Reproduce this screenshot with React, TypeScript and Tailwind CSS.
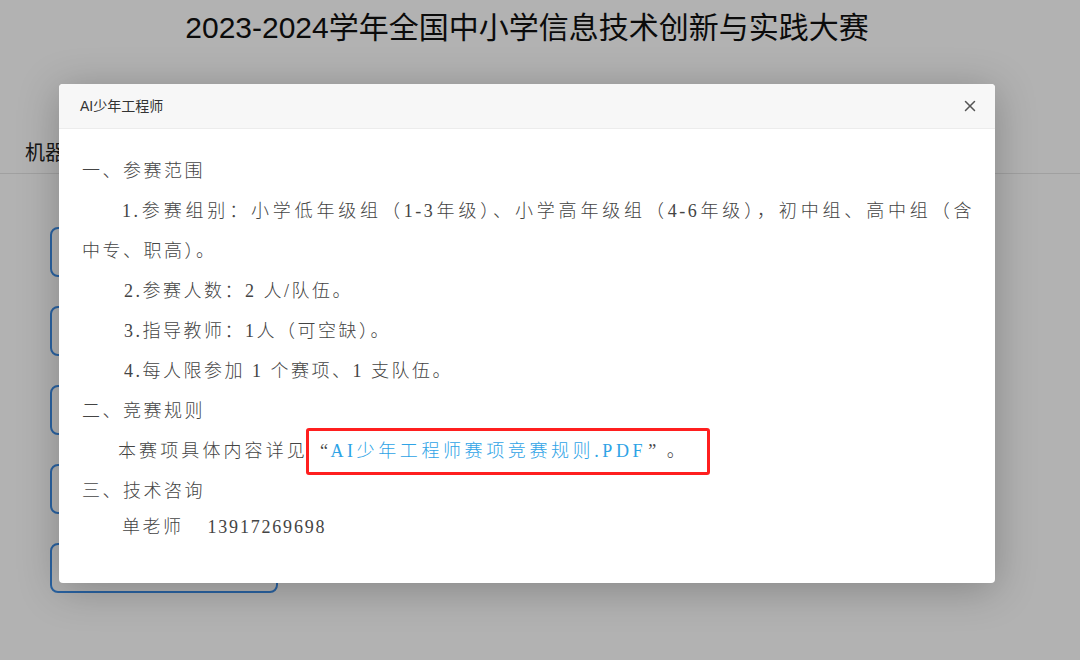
import { X } from 'lucide-react'

const bodyFont = '[font-family:"Liberation_Serif","Noto_Sans_CJK_SC",serif]'

function Line({ children, indent = false, className = '' }: { children: React.ReactNode; indent?: boolean; className?: string }) {
  return (
    <div className={`h-10 leading-10 whitespace-nowrap ${indent ? 'pl-[42px]' : ''} ${className}`}>
      {children}
    </div>
  )
}

function Modal() {
  return (
    <div className="absolute left-[59px] top-[84px] w-[936px] h-[499px] bg-white rounded-[4px] shadow-[0_6px_40px_rgba(0,0,0,0.25)] overflow-hidden">
      <div className="h-[45px] flex items-center justify-between pl-[21px] pr-[16px] bg-[#f7f7f7] border-b border-[#ececec]">
        <span className='text-[14px] text-[#333] [font-family:"Liberation_Sans","Noto_Sans_CJK_SC",sans-serif]'>AI少年工程师</span>
        <X className="w-[18px] h-[18px] text-[#555]" strokeWidth={2} />
      </div>
      <div className={`pl-[23px] pr-[20px] pt-[22px] text-[18px] tracking-[2.5px] text-[#444] font-light ${bodyFont}`}>
        <Line>一、参赛范围</Line>
        <div className="h-10 leading-10 pl-[40px] whitespace-nowrap text-justify [text-align-last:justify] w-[892px]">
          1.参赛组别：小学低年级组（1-3年级）、小学高年级组（4-6年级），初中组、高中组（含
        </div>
        <Line>中专、职高）。</Line>
        <Line indent>2.参赛人数：2 人/队伍。</Line>
        <Line indent>3.指导教师：1人（可空缺）。</Line>
        <Line indent>4.每人限参加 1 个赛项、1 支队伍。</Line>
        <Line>二、竞赛规则</Line>
        <Line className="pl-[36px]">
          <span className="tracking-[3.1px]">本赛项具体内容详见</span>
          <span className="relative">
            <span className="pl-[12px]">“</span>
            <span className="text-[#2ea3e6] tracking-[3.6px]">AI少年工程师赛项竞赛规则.PDF</span>
            <span className="pl-[2px]">”</span>
            <span className="pl-[8px]">。</span>
            <span className="absolute left-[-2px] right-[-23px] top-[-13px] bottom-[-14px] border-[3px] border-[#ff1f1f] rounded-[3px]" />
          </span>
        </Line>
        <Line>三、技术咨询</Line>
        <div className="h-8 leading-8 pl-[40px] whitespace-nowrap tracking-[2.5px]">
          单老师<span className="ml-[24px] tracking-[1.8px]">13917269698</span>
        </div>
      </div>
    </div>
  )
}

export default function App() {
  return (
    <div className="relative w-[1080px] h-[660px] overflow-hidden bg-white">
      <div className="pr-[26px] pt-[8px] text-center">
        <h1 className='text-[30px] leading-[40px] text-[#111] [font-family:"Liberation_Sans","Noto_Sans_CJK_SC",sans-serif]'>
          2023-2024学年全国中小学信息技术创新与实践大赛
        </h1>
      </div>
      <div className="mt-[90px] border-b border-[#e6e6e6] pb-[7px] pl-[25px]">
        <span className='text-[20px] leading-[28px] text-[#222] [font-family:"Noto_Sans_CJK_SC",sans-serif]'>机器人</span>
      </div>
      <div className="pl-[50px] pt-[53px] flex flex-col gap-[29px]">
        {[0, 1, 2, 3, 4].map((i) => (
          <div key={i} className="w-[228px] h-[50px] rounded-[8px] border-2 border-[#3d8ee8]" />
        ))}
      </div>
      <div className="absolute inset-0 bg-black/30" />
      <Modal />
    </div>
  )
}
